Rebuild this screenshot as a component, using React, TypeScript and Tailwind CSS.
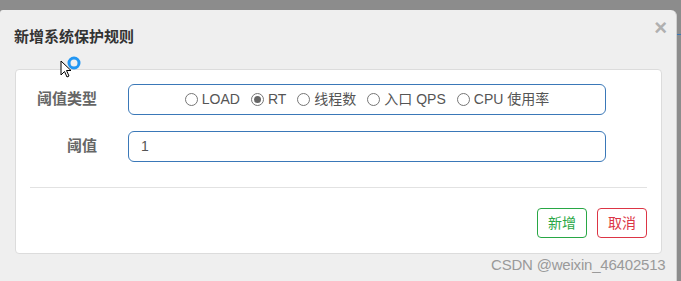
import React from "react";

const options = [
  { label: "LOAD", checked: false },
  { label: "RT", checked: true },
  { label: "线程数", checked: false },
  { label: "入口 QPS", checked: false },
  { label: "CPU 使用率", checked: false },
];

function Radio({ checked }: { checked: boolean }) {
  return (
    <span className="w-[13px] h-[13px] rounded-full border border-[#767676] bg-white flex items-center justify-center">
      {checked && <span className="w-[7px] h-[7px] rounded-full bg-[#666]" />}
    </span>
  );
}

export default function App() {
  return (
    <div
      className="relative w-[681px] h-[281px] overflow-hidden bg-[#8c8c8c] pt-[10px]"
      style={{ fontFamily: '"Liberation Sans", "Noto Sans CJK SC", sans-serif' }}
    >
      <div className="relative w-[677px] h-[271px] bg-[#efefef] rounded-tr-[6px] rounded-tl-[3px] border-r border-[#d0d0d0]">
        {/* Header */}
        <div className="pt-[17px] pl-[14px] h-[59px]">
          <h4 className="text-[15px] leading-[20px] font-bold text-[#333]">新增系统保护规则</h4>
        </div>
        <button className="absolute right-[9px] top-[6px] text-[22px] leading-[24px] font-bold text-[#b0b0b0]">
          ×
        </button>

        {/* Body panel */}
        <div className="ml-[15px] w-[647px] h-[185px] bg-white border border-[#dcdcdc] rounded-[4px] pt-[14px]">
          <div className="flex items-center">
            <label className="w-[112px] pr-[31px] text-right text-[15px] font-bold text-[#666]">阈值类型</label>
            <div className="w-[478px] h-[31px] border border-[#3a78b8] rounded-[6px] flex items-center justify-center gap-[11px] text-[14px] text-[#555]">
              {options.map((o) => (
                <span key={o.label} className="flex items-center gap-[4px]">
                  <Radio checked={o.checked} />
                  <span>{o.label}</span>
                </span>
              ))}
            </div>
          </div>
          <div className="flex items-center mt-[16px]">
            <label className="w-[112px] pr-[31px] text-right text-[15px] font-bold text-[#666]">阈值</label>
            <div className="w-[478px] h-[31px] border border-[#3a78b8] rounded-[6px] flex items-center pl-[12px] text-[14px] text-[#555]">
              1
            </div>
          </div>
          <div className="mx-[14px] mt-[25px] border-t border-[#e2e2e2]" />
          <div className="flex justify-end gap-[10px] mr-[14px] mt-[20px]">
            <button className="w-[50px] h-[30px] border border-[#28a745] rounded-[4px] text-[14px] text-[#28a745]">新增</button>
            <button className="w-[50px] h-[30px] border border-[#dc3545] rounded-[4px] text-[14px] text-[#dc3545]">取消</button>
          </div>
        </div>
      </div>

      {/* right page strip detail */}
      <div className="absolute right-0 top-[34px] w-[4px] h-[1px] bg-[#3a78b8]" />

      {/* mouse cursor overlay */}
      <svg className="absolute left-[58px] top-[56px]" width="24" height="24" viewBox="0 0 24 24">
        <path d="M3 5 L3 19 L6.5 15.5 L9 21 L11 20 L8.5 14.5 L13 14.5 Z" fill="white" stroke="black" strokeWidth="1" />
        <circle cx="16" cy="7" r="5" fill="none" stroke="#2196f3" strokeWidth="3" />
      </svg>

      {/* watermark */}
      <div className="absolute left-[491px] top-[256px] text-[15px] tracking-[-0.2px] text-[#9a9a9a] leading-[18px]">
        CSDN @weixin_46402513
      </div>
    </div>
  );
}
